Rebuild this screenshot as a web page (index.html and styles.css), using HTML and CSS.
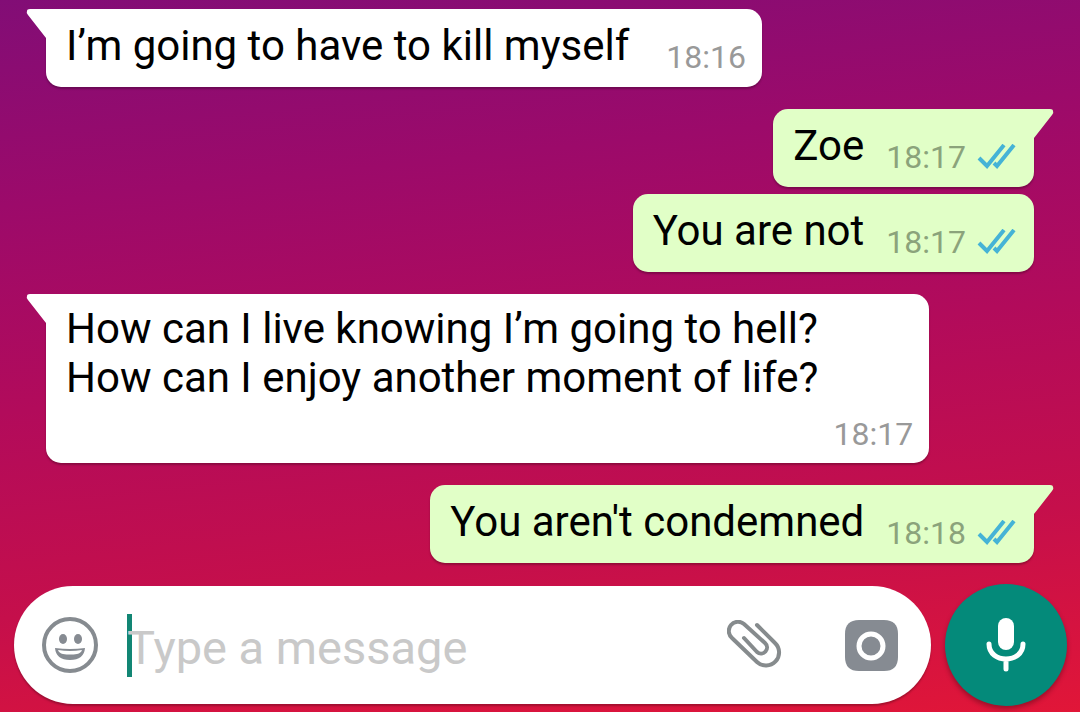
FILE: index.html
```
<!DOCTYPE html>
<html lang="en">

<head>
    <meta charset="utf-8">
    <meta name="viewport" content="width=device-width, initial-scale=1">
    <title>Chat</title>
    <link rel="stylesheet" href="styles.css">
</head>

<body>
    <!-- Shapes used by more than one message -->
    <svg class="shapes" width="0" height="0" aria-hidden="true">
        <symbol id="tail" viewBox="0 0 21 30">
            <path d="M21 0H4Q1 0 1 2Q0 4 2 6L20 29H21Z" />
        </symbol>
        <symbol id="ticks" viewBox="0 0 40 26">
            <path d="M3 14L11 22L28 1M18 19L21 22L38 1" />
        </symbol>
    </svg>

    <ol class="messages">
        <li class="message incoming first">
            <svg class="tail" aria-hidden="true"><use href="#tail" /></svg>
            <p>I’m going to have to kill myself</p>
            <div class="meta"><time>18:16</time></div>
        </li>
        <li class="message outgoing first">
            <svg class="tail" aria-hidden="true"><use href="#tail" /></svg>
            <p>Zoe</p>
            <div class="meta">
                <time>18:17</time>
                <svg class="ticks" role="img" aria-label="Read"><use href="#ticks" /></svg>
            </div>
        </li>
        <li class="message outgoing">
            <p>You are not</p>
            <div class="meta">
                <time>18:17</time>
                <svg class="ticks" role="img" aria-label="Read"><use href="#ticks" /></svg>
            </div>
        </li>
        <li class="message incoming first long">
            <svg class="tail" aria-hidden="true"><use href="#tail" /></svg>
            <p>How can I live knowing I’m going to hell?<br>How can I enjoy another moment of life?</p>
            <div class="meta"><time>18:17</time></div>
        </li>
        <li class="message outgoing first">
            <svg class="tail" aria-hidden="true"><use href="#tail" /></svg>
            <p>You aren't condemned</p>
            <div class="meta">
                <time>18:18</time>
                <svg class="ticks" role="img" aria-label="Read"><use href="#ticks" /></svg>
            </div>
        </li>
    </ol>

    <form class="composer">
        <div class="inputBar">
            <button type="button" aria-label="Emoji">
                <svg width="56" height="56" viewBox="0 0 56 56">
                    <circle cx="28" cy="28" r="26" fill="none" stroke="#868b90" stroke-width="4" />
                    <ellipse cx="21" cy="22" rx="4" ry="5" />
                    <ellipse cx="36" cy="22" rx="4" ry="5" />
                    <path d="M13 31Q28 33 43 31Q42 43 28 43Q14 43 13 31Z" />
                    <path d="M16 33Q28 35 40 33Q39 36 35 37Q28 38 21 37Q17 36 16 33Z" fill="#fff" />
                </svg>
            </button>
            <div class="field">
                <input type="text" placeholder="Type a message" aria-label="Message">
            </div>
            <button type="button" aria-label="Attach">
                <svg width="56" height="50" viewBox="0 0 56 50">
                    <path d="M30 5L48 23A13 13 0 0 1 30 42L5 18A9 9 0 0 1 17 4L38 23A6 6 0 0 1 30 32L17 18"
                        fill="none" stroke="#868b8d" stroke-width="4" stroke-linecap="round" stroke-linejoin="round" />
                </svg>
            </button>
            <button type="button" aria-label="Camera">
                <svg width="53" height="51" viewBox="0 0 53 51">
                    <path d="M14 0H39Q53 0 53 14V37Q53 51 39 51H14Q0 51 0 37V14Q0 0 14 0Z" />
                    <circle cx="26" cy="26" r="12" fill="none" stroke="#fff" stroke-width="5" />
                </svg>
            </button>
        </div>
        <button class="micButton" type="button" aria-label="Record voice message">
            <svg width="40" height="54" viewBox="0 0 40 54">
                <rect x="12" y="0" width="16" height="32" rx="8" />
                <path d="M3 26C3 46 37 46 37 26M20 42V51" fill="none" stroke="#fff" stroke-width="5" stroke-linecap="round" />
            </svg>
        </button>
    </form>
</body>

</html>
```
FILE: styles.css
```
* {
    box-sizing: border-box;
}

body {
    display: flex;
    flex-direction: column;
    gap: 21px;
    min-height: 100vh;
    margin: 0;
    padding-top: 9px;
    font-family: Roboto, "Liberation Sans", sans-serif;
    background: linear-gradient(174deg, #820d76 0%, #9c0a6a 25%, #b20b5b 50%, #c50f4b 75%, #e11638 100%);
}

.shapes {
    position: absolute;
}

.messages {
    display: flex;
    flex-direction: column;
    margin: 0;
    padding: 0 46px;
    list-style: none;
}

.message {
    position: relative;
    display: flex;
    align-items: flex-end;
    gap: 22px;
    min-height: 78px;
    margin-top: 7px;
    padding: 12px 18px 12px 20px;
    border-radius: 15px;
    box-shadow: 0 2px 2px rgba(0, 0, 0, 0.25);
}

.message.first {
    margin-top: 22px;
}

.message.first:first-of-type {
    margin-top: 0;
}

.message p {
    align-self: flex-start;
    margin: 0;
    font-size: 42px;
    line-height: 49px;
    color: #000;
}

.incoming {
    align-self: flex-start;
    gap: 37px;
    padding-right: 16px;
    background-color: #fff;
}

.incoming.first {
    border-top-left-radius: 0;
}

.outgoing {
    align-self: flex-end;
    background-color: #e1ffc7;
}

.outgoing.first {
    border-top-right-radius: 0;
}

.tail {
    position: absolute;
    top: 0;
    width: 21px;
    height: 30px;
}

.incoming .tail {
    right: 100%;
    margin-right: -1px;
    fill: #fff;
}

.outgoing .tail {
    left: 100%;
    margin-left: -1px;
    fill: #e1ffc7;
    transform: scaleX(-1);
}

.meta {
    display: flex;
    align-items: center;
    gap: 10px;
    font-size: 32px;
    line-height: 36px;
    color: #999;
}

.outgoing .meta {
    color: #8ba37b;
}

.ticks {
    width: 40px;
    height: 26px;
    fill: none;
    stroke: #45b3d6;
    stroke-width: 4px;
    overflow: visible;
}

/* Time goes on its own line under the text */
.message.long {
    flex-direction: column;
    gap: 14px;
    padding-top: 10px;
    padding-bottom: 11px;
}

.long p {
    margin-right: 95px;
}

.composer {
    display: flex;
    align-items: center;
    gap: 14px;
    padding: 0 13px 0 14px;
}

.composer button {
    display: flex;
    flex-shrink: 0;
    align-items: center;
    justify-content: center;
    padding: 0;
    border: none;
    background: none;
    fill: #868b92;
    cursor: pointer;
}

.inputBar {
    display: flex;
    flex: 1;
    align-items: center;
    gap: 62px;
    min-width: 0;
    height: 118px;
    padding: 0 33px 0 28px;
    border-radius: 59px;
    background-color: #fff;
    box-shadow: 0 2px 2px rgba(0, 0, 0, 0.25);
}

.field {
    position: relative;
    flex: 1;
    min-width: 0;
    margin-left: -33px;
}

/* Text cursor */
.field::before {
    content: "";
    position: absolute;
    top: 0;
    left: 0;
    width: 5px;
    height: 63px;
    background-color: #128674;
}

.field input {
    position: relative;
    display: block;
    width: 100%;
    height: 63px;
    padding: 4px 0 0;
    border: none;
    outline: none;
    background: none;
    font-family: inherit;
    font-size: 47px;
    caret-color: transparent;
}

.field input::placeholder {
    color: #c9c9c9;
    opacity: 1;
}

.composer .micButton {
    width: 122px;
    height: 122px;
    border-radius: 50%;
    background-color: #048a7a;
    fill: #fff;
    box-shadow: 0 3px 5px rgba(0, 0, 0, 0.3);
}
```
